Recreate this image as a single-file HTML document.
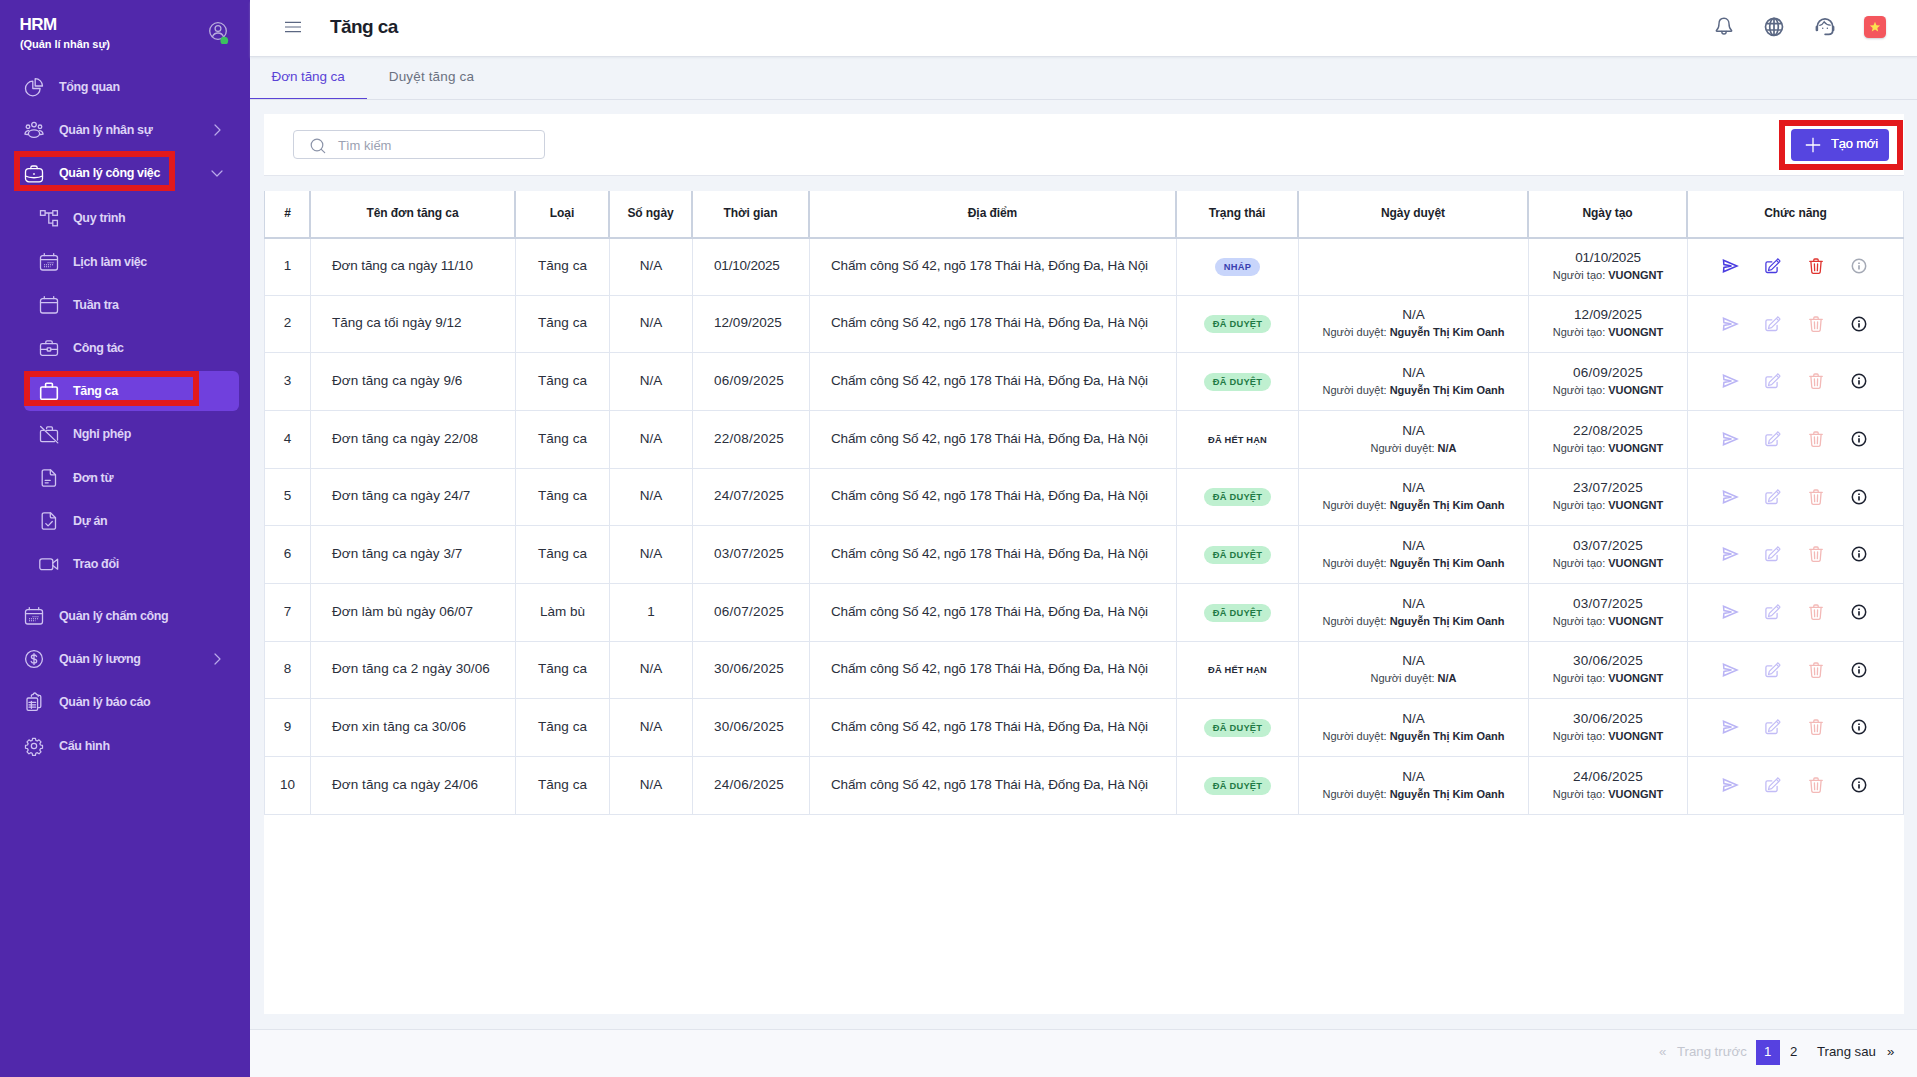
<!DOCTYPE html>
<html lang="vi">
<head>
<meta charset="utf-8">
<title>Tăng ca</title>
<style>
*{box-sizing:border-box;margin:0;padding:0}
html,body{width:1917px;height:1077px;overflow:hidden}
body{font-family:"Liberation Sans",sans-serif;background:#f1f4f9;color:#252a37;position:relative;font-size:13px}
.abs{position:absolute}
/* ---------- sidebar ---------- */
#side{position:absolute;left:0;top:0;width:250px;height:1077px;background:#5128ab;color:#fff}
#side .brand{position:absolute;left:19.500px;top:15px;font-weight:700;font-size:17px;line-height:20px;letter-spacing:-.55px}
#side .brand2{position:absolute;left:20px;top:37px;font-weight:700;font-size:11px;line-height:14px;letter-spacing:-.07px}
.mi{position:absolute;left:0;width:250px;height:40px;color:#ddd3f6;font-weight:700;font-size:12.5px;letter-spacing:-.35px}
.mi svg{position:absolute;top:50%;transform:translateY(-50%);fill:none;stroke:#cfc2f2;stroke-width:1.3;stroke-linecap:round;stroke-linejoin:round}
.mi span{position:absolute;top:50%;transform:translateY(-50%);white-space:nowrap;line-height:16px}
.mi.top svg.ic{left:24px;width:20px;height:20px}
.mi.top span{left:59px}
.mi.sub svg.ic{left:39px;width:20px;height:20px}
.mi.sub span{left:73px}
.mi svg.chev{left:210px;width:14px;height:14px;stroke:#b9a9ea;stroke-width:1.2}
.mi.on{color:#fff}
.mi.on svg.ic{stroke:#fff}
#activebg{position:absolute;left:24px;top:371px;width:215px;height:40px;border-radius:6px;background:#7040dd}
.red{position:absolute;border:6px solid #e3191c;pointer-events:none}
/* ---------- header ---------- */
#head{position:absolute;left:250px;top:0;width:1667px;height:56px;background:#fff;box-shadow:0 1px 0 #dde1e9,0 2px 2px rgba(200,206,218,.35);z-index:3}
#head h1{position:absolute;left:80px;top:15px;font-size:19px;line-height:24px;font-weight:700;color:#1c1f2b;letter-spacing:-.6px}
/* ---------- tabs ---------- */
#tabs{position:absolute;left:250px;top:57px;width:1667px;height:43px;border-bottom:1px solid #dde1ea}
#tabs .t{position:absolute;top:11px;font-size:13.5px;line-height:18px;white-space:nowrap;letter-spacing:-.1px}
#tabs .t1{left:21.600px;color:#5a43d6}
#tabs .t2{left:138.800px;color:#6b7180;letter-spacing:.15px}
#tabs .ul{position:absolute;left:0;top:40.800px;width:117px;height:1.500px;background:#5a43d6}
/* ---------- toolbar ---------- */
#tool{position:absolute;left:264px;top:114px;width:1640px;height:62px;background:#fff;border-bottom:1px solid #e3e6ee}
#search{position:absolute;left:29px;top:16px;width:252px;height:29px;border:1px solid #cdd2de;border-radius:4px;background:#fff}
#search span{position:absolute;left:44px;top:6.800px;font-size:13px;line-height:16px;color:#9ba1b2}
#btn{position:absolute;left:1791px;top:129px;width:98px;height:32px;border-radius:4px;background:#5645e0;color:#fff;font-size:13px;font-weight:400}
#btn span{position:absolute;left:40px;top:7px;line-height:16px;letter-spacing:-.2px;white-space:nowrap;text-shadow:0 0 .4px #fff}
/* ---------- table ---------- */
#card{position:absolute;left:264px;top:191px;width:1640px;height:823px;background:#fff}
.th{position:absolute;top:0;height:48px;border-left:2px solid #cad2e0;font-weight:700;font-size:12px;color:#1c1f2b;text-align:center;line-height:45.500px;letter-spacing:-.07px;white-space:nowrap;margin-left:-1px;z-index:2}
.th:first-child{border-left:1px solid #ced6e3;margin-left:0}
.thr{position:absolute;left:0;top:46px;width:1640px;height:2px;background:#cad2e0;z-index:2}
.rb{position:absolute;left:1639px;top:0;width:1px;height:623px;background:#dfe4ee;z-index:1}
.row{position:absolute;left:0;width:1640px;height:57.600px;border-bottom:1px solid #e1e6f0}
.c{position:absolute;top:0;height:100%;border-left:1px solid #e1e6f0;text-align:center;font-size:13.500px;color:#2a2f3c;white-space:nowrap;display:flex;flex-direction:column;justify-content:center;align-items:center;line-height:17px;padding-bottom:2.400px}
.c:first-child{margin-left:0}
.c.l{align-items:flex-start;padding-left:21px}
.nm{letter-spacing:-.1px}
.loc{letter-spacing:-.16px}
.c.two{padding-bottom:2px}
.c.two>span{margin-bottom:1px}
.c small{font-size:11px;line-height:16px;color:#3a3f4c;letter-spacing:0}
.c small b{color:#252a37}
.badge{display:inline-block;font-style:normal;font-size:9.300px;font-weight:700;letter-spacing:.250px;line-height:18.500px;height:18px;padding:0 8.500px;border-radius:9px;position:relative;top:1.500px}
.b-draft{background:#c8d5fb;color:#3a3fb0}
.b-ok{background:#bff0d0;color:#1f7a45}
.b-exp{color:#252a37;padding:0;letter-spacing:.150px}
.act svg{position:absolute;top:27.800px;transform:translateY(-50%);width:18px;height:18px;fill:none;stroke-linecap:round;stroke-linejoin:round}
.i1,.i2{stroke:#4a3ce0}.i3{stroke:#df342f}.i4{stroke:#a4a9b5}
.dis .i1{stroke:#bab4f5}.dis .i2{stroke:#c2bcf6}.dis .i3{stroke:#f3b9b7}.dis .i4{stroke:#1c2130}
/* ---------- footer ---------- */
#foot{position:absolute;left:250px;top:1029px;width:1667px;height:48px;background:#f8f9fc;border-top:1px solid #e0e4ec}
#foot span{position:absolute;top:13px;font-size:13.2px;line-height:18px;white-space:nowrap}
</style>
</head>
<body>
<div id="side">
<div class="brand">HRM</div>
<div class="brand2">(Quản lí nhân sự)</div>
<svg class="abs" style="left:206.700px;top:19.700px" width="24" height="24" viewBox="0 0 24 24" fill="none" stroke="#b9aedd" stroke-width="1.3"><circle cx="11" cy="11" r="8.300"/><circle cx="11" cy="8.600" r="2.900"/><path d="M5.400 17c1-2.900 3.100-4 5.600-4s4.600 1.100 5.600 4"/><circle cx="17.300" cy="20.700" r="3.900" fill="#3cc25f" stroke="none"/></svg>
<div id="activebg"></div>

<div class="mi top" style="top:67px"><svg class="ic" viewBox="0 0 20 20"><path d="M8.800 4.200A7.300 7.300 0 1 0 16.100 11.500H8.800Z"/><path d="M11.200 1.700a7.300 7.300 0 0 1 7.300 7.300h-7.300Z"/></svg><span>Tổng quan</span></div>

<div class="mi top" style="top:109.5px"><svg class="ic" viewBox="0 0 20 20"><circle cx="10" cy="4.600" r="2.300"/><circle cx="4" cy="6.800" r="1.800"/><circle cx="16" cy="6.800" r="1.800"/><ellipse cx="10" cy="13.600" rx="5.600" ry="3.800"/><path d="M4.800 10.700C2.600 10.700 1.300 12 .9 14.200c1.200.3 2.300.4 3.500.2M15.200 10.700c2.200 0 3.500 1.300 3.900 3.500-1.200.3-2.300.4-3.500.2"/></svg><span>Quản lý nhân sự</span><svg class="chev" viewBox="0 0 14 14"><path d="M5 2l5 5-5 5"/></svg></div>

<div class="mi top on" style="top:152.5px"><svg class="ic" viewBox="0 0 20 20"><rect x="1.500" y="5.600" width="17" height="13.200" rx="3.400"/><path d="M6.800 5.600V4.800a1.800 1.800 0 0 1 1.800-1.800h2.800a1.800 1.800 0 0 1 1.800 1.800v.8"/><path d="M1.500 13c4 2.300 13 2.300 17 0"/><path d="M9.700 11h.6" stroke-width="1.600"/></svg><span>Quản lý công việc</span><svg class="chev" viewBox="0 0 14 14"><path d="M2 5l5 5 5-5"/></svg></div>

<div class="mi sub" style="top:198px"><svg class="ic" viewBox="0 0 20 20" style="stroke-linejoin:miter;stroke-linecap:butt"><rect x="1.500" y="2.700" width="4.600" height="4.600"/><rect x="13.800" y="2.700" width="4.600" height="4.600"/><rect x="13.800" y="12.400" width="4.600" height="5.400"/><path d="M6.100 5h7.700M9.800 5v10.200h4"/></svg><span>Quy trình</span></div>

<div class="mi sub" style="top:242px"><svg class="ic" viewBox="0 0 20 20"><rect x="1.500" y="3.600" width="17" height="14.400" rx="2.200"/><path d="M1.500 7.600h17M5.300 1.600v2M14.700 1.600v2"/><path d="M8.500 10.800h6.500M5 12.800h10M5 14.800h6.500" stroke-dasharray="1.100 .9" stroke-linecap="butt" stroke-width="1.100"/></svg><span>Lịch làm việc</span></div>

<div class="mi sub" style="top:285px"><svg class="ic" viewBox="0 0 20 20"><rect x="1.500" y="3.600" width="17" height="14.400" rx="2.200"/><path d="M1.500 7.600h17M5.300 1.600v2M14.700 1.600v2"/></svg><span>Tuần tra</span></div>

<div class="mi sub" style="top:328px"><svg class="ic" viewBox="0 0 20 20"><rect x="1.500" y="5.600" width="17" height="11.800" rx="1.800"/><path d="M6.800 5.600V4.100a1.300 1.300 0 0 1 1.300-1.300h3.800a1.300 1.300 0 0 1 1.300 1.300v1.500"/><path d="M1.500 11.400h6.700M11.800 11.400h6.700"/><rect x="8.200" y="9.800" width="3.600" height="3.200" rx=".5"/></svg><span>Công tác</span></div>

<div class="mi sub on" style="top:371px"><svg class="ic" viewBox="0 0 20 20" style="stroke-width:1.600"><rect x="1.700" y="6" width="16.600" height="12.400" rx="1.300"/><path d="M6.600 6V3.300a1 1 0 0 1 1-1h4.800a1 1 0 0 1 1 1V6"/></svg><span>Tăng ca</span></div>

<div class="mi sub" style="top:414px"><svg class="ic" viewBox="0 0 20 20"><path d="M4.600 6.400H2.900a1.400 1.400 0 0 0-1.400 1.400v8.400a1.400 1.400 0 0 0 1.400 1.400h12.600"/><path d="M7.300 6.400h9.800a1.400 1.400 0 0 1 1.400 1.400v8.200"/><path d="M7.600 4.600V3.900a1 1 0 0 1 1-1h3.800a1 1 0 0 1 1 1v2.500"/><path d="M1.600 2.500l17.200 16.400"/></svg><span>Nghỉ phép</span></div>

<div class="mi sub" style="top:458px"><svg class="ic" viewBox="0 0 20 20"><path d="M5 1.800h6.500l5 5v9.600a1.800 1.800 0 0 1-1.800 1.800H5a1.800 1.800 0 0 1-1.800-1.800V3.600A1.800 1.800 0 0 1 5 1.800Z"/><path d="M11.300 1.900v3.700a1.200 1.200 0 0 0 1.200 1.200h3.800"/><path d="M6.200 12.400h5M6.200 14.800h3"/></svg><span>Đơn từ</span></div>

<div class="mi sub" style="top:501px"><svg class="ic" viewBox="0 0 20 20"><path d="M5 1.800h6.500l5 5v9.600a1.800 1.800 0 0 1-1.800 1.800H5a1.800 1.800 0 0 1-1.800-1.800V3.600A1.800 1.800 0 0 1 5 1.800Z"/><path d="M11.300 1.900v3.700a1.200 1.200 0 0 0 1.200 1.200h3.800"/><path d="M6.800 12.600l2.300 2.300 4.200-4.400"/></svg><span>Dự án</span></div>

<div class="mi sub" style="top:544px"><svg class="ic" viewBox="0 0 20 20"><rect x=".8" y="4.800" width="13" height="10.800" rx="2.200"/><path d="M13.800 9l4.800-3.800v10l-4.800-3.800"/></svg><span>Trao đổi</span></div>

<div class="mi top" style="top:595.5px"><svg class="ic" viewBox="0 0 20 20"><rect x="1.500" y="3.600" width="17" height="14.400" rx="2.200"/><path d="M1.500 7.600h17M5.300 1.600v2M14.700 1.600v2"/><path d="M8.500 10.800h6.500M5 12.800h10M5 14.800h6.500" stroke-dasharray="1.100 .9" stroke-linecap="butt" stroke-width="1.100"/></svg><span>Quản lý chấm công</span></div>

<div class="mi top" style="top:638.5px"><svg class="ic" viewBox="0 0 20 20"><circle cx="10" cy="10" r="8.400"/><path d="M12.600 7.600c-.3-1-1.300-1.600-2.600-1.600-1.500 0-2.600.8-2.600 2s1 1.700 2.600 2 2.700.8 2.700 2.100-1.200 2-2.700 2c-1.400 0-2.500-.7-2.800-1.800M10 4.600v10.800"/></svg><span>Quản lý lương</span><svg class="chev" viewBox="0 0 14 14"><path d="M5 2l5 5-5 5"/></svg></div>

<div class="mi top" style="top:681.5px"><svg class="ic" viewBox="0 0 20 20"><path d="M7.400 4.300V3.600a1 1 0 0 1 1-1h.8a1.600 1.600 0 0 1 3.200 0h.8a1 1 0 0 1 1 1v.7"/><path d="M14.200 3.400h1.200a1.400 1.400 0 0 1 1.400 1.400v9.400a1.400 1.400 0 0 1-1.400 1.400h-1.800"/><rect x="3" y="6" width="10.600" height="12.400" rx="1.300"/><path d="M5 10.400h6.600M5 12.800h6.600M5 15.200h6.600M7.400 9.300v7"/></svg><span>Quản lý báo cáo</span></div>

<div class="mi top" style="top:725.5px"><svg class="ic" viewBox="0 0 24 24" style="stroke-width:1.500"><circle cx="12" cy="12" r="3.200"/><path d="M10.300 2.800h3.400l.5 2.500 1.700.7 2.100-1.400 2.400 2.400-1.400 2.100.7 1.700 2.500.5v3.400l-2.500.5-.7 1.700 1.400 2.100-2.400 2.400-2.100-1.400-1.700.7-.5 2.500h-3.400l-.5-2.500-1.700-.7-2.100 1.400-2.400-2.400 1.400-2.100-.7-1.700-2.500-.5v-3.400l2.500-.5.7-1.700-1.400-2.100 2.400-2.400 2.100 1.400 1.700-.7Z"/></svg><span>Cấu hình</span></div>

<div class="red" style="left:14px;top:151px;width:161px;height:40px"></div>
<div class="red" style="left:24px;top:371px;width:175px;height:35px"></div>
</div>
<div id="head">
<svg class="abs" style="left:34px;top:20px" width="18" height="14" viewBox="0 0 18 14" fill="none" stroke="#5b6782" stroke-width="1.150"><path d="M1 2.400h16M1 7h16M1 11.600h16"/></svg>
<h1>Tăng ca</h1>
<svg class="abs" style="left:1463px;top:16px" width="22" height="22" viewBox="0 0 22 22" fill="none" stroke="#5b6884" stroke-width="1.400" stroke-linecap="round" stroke-linejoin="round"><path d="M11 2.300c-3.200 0-5 2.400-5 5.400 0 3.600-.9 5.300-2.500 6.600-.4.400-.2.900.4.900h14.200c.6 0 .8-.5.400-.9-1.600-1.300-2.500-3-2.500-6.600 0-3-1.800-5.400-5-5.400Z"/><path d="M8.800 15.400c0 1.500.9 2.600 2.200 2.600s2.200-1.100 2.200-2.600"/></svg>
<svg class="abs" style="left:1513px;top:16px" width="22" height="22" viewBox="0 0 22 22" fill="none" stroke="#5b6884" stroke-width="1.700"><circle cx="11" cy="10.800" r="8.500"/><ellipse cx="11" cy="10.800" rx="4.300" ry="8.500"/><path d="M11 2.300v17M3.300 7.600h15.400M3.300 14h15.400"/></svg>
<svg class="abs" style="left:1564px;top:16px" width="22" height="22" viewBox="0 0 22 22" fill="none" stroke="#5b6884" stroke-width="1.700" stroke-linecap="round"><path d="M3.300 14.200V10.500a7.700 7.700 0 0 1 15.400 0v3.700"/><path d="M2.800 11v3M19.200 11v3" stroke-width="2.400"/><path d="M18.700 14.400c0 2.600-1.600 3.900-4 3.900h-3.600"/><path d="M5.800 9.400c1.600-.4 3.400-1.800 4.400-3.600 1.400 2 3.600 3.200 6 3.400" stroke-width="1.300"/><path d="M8.700 12.200h.1M13.300 12.200h.1" stroke-width="1.400"/></svg>
<div class="abs" style="left:1614px;top:16px;width:22px;height:22px;border-radius:4.500px;background:#f4565d;box-shadow:0 1px 2px rgba(60,70,90,.25)"><svg class="abs" style="left:5px;top:5px" width="12" height="12" viewBox="0 0 12 12"><path fill="#fbe14f" d="M6 .8l1.450 3.450 3.650.3-2.800 2.400.9 3.650L6 8.600l-3.200 2 .9-3.650L.9 4.550l3.650-.3Z"/></svg></div>
</div>
<div id="tabs"><div class="t t1">Đơn tăng ca</div><div class="t t2">Duyệt tăng ca</div><div class="ul"></div></div>
<div id="tool"><div id="search"><svg class="abs" style="left:15px;top:6px" width="18" height="18" viewBox="0 0 18 18" fill="none" stroke="#8b93a8" stroke-width="1.200" stroke-linecap="round"><circle cx="8" cy="8" r="5.800"/><path d="M12.300 12.300l3.400 3.400"/></svg><span>Tìm kiếm</span></div></div>
<div id="btn"><svg class="abs" style="left:13.600px;top:7.700px" width="16" height="16" viewBox="0 0 16 16" fill="none" stroke="#fff" stroke-width="1.300"><path d="M8 .800v14.400M.800 8h14.400"/></svg><span>Tạo mới</span></div>
<div class="red" style="left:1779px;top:120.200px;width:124px;height:50.300px"></div>
<svg width="0" height="0" style="position:absolute"><defs>
<symbol id="i-send" viewBox="0 0 18 18"><path d="M2.500 3.300L16 9 2.500 14.700 2.900 10.500 10.500 9 2.900 7.500Z" stroke-width="1.500" stroke-linejoin="miter"/></symbol>
<symbol id="i-edit" viewBox="0 0 18 18"><path d="M7.800 4.900H3.400a1.500 1.500 0 0 0-1.500 1.500v7.600a1.500 1.500 0 0 0 1.500 1.500h8.200a1.500 1.500 0 0 0 1.500-1.500V10.400" stroke-width="1.300"/><path d="M13.900 1.800l1.800 1.800a.700.700 0 0 1 0 1L7.600 12.700l-3.100.800.800-3.100 8.100-8.100a.700.700 0 0 1 .500-.500ZM12.500 3.400l1.900 1.900" stroke-width="1.200"/></symbol>
<symbol id="i-trash" viewBox="0 0 18 18"><path d="M2.700 4.300h12.600M6.800 4.100V3a1 1 0 0 1 1-1h2.400a1 1 0 0 1 1 1v1.100M3.900 4.600l.9 10.600a1.400 1.400 0 0 0 1.400 1.200h5.600a1.400 1.400 0 0 0 1.400-1.200l.9-10.600M7.400 7l.25 6.700M10.600 7l-.25 6.700" stroke-width="1.300"/></symbol>
<symbol id="i-info" viewBox="0 0 18 18"><circle cx="9" cy="9" r="6.700" stroke-width="1.500"/><path d="M9 8.300v4.300" stroke-width="1.700" stroke-linecap="butt"/><path d="M9 5.400v1.500" stroke-width="1.700" stroke-linecap="butt"/></symbol>
</defs></svg>
<div id="card">
<div class="th" style="left:0px;width:46px">#</div>
<div class="th" style="left:46px;width:205px">Tên đơn tăng ca</div>
<div class="th" style="left:251px;width:94px">Loại</div>
<div class="th" style="left:345px;width:83px">Số ngày</div>
<div class="th" style="left:428px;width:117px">Thời gian</div>
<div class="th" style="left:545px;width:367px">Địa điểm</div>
<div class="th" style="left:912px;width:122px">Trạng thái</div>
<div class="th" style="left:1034px;width:230px">Ngày duyệt</div>
<div class="th" style="left:1264px;width:159px">Ngày tạo</div>
<div class="th" style="left:1423px;width:217px">Chức năng</div>
<div class="thr"></div>
<div class="row" style="top:47px;height:58px">
<div class="c " style="left:0px;width:46px"><span>1</span></div>
<div class="c l" style="left:46px;width:205px"><span class="nm" style="letter-spacing:-0.13px">Đơn tăng ca ngày 11/10</span></div>
<div class="c " style="left:251px;width:94px"><span>Tăng ca</span></div>
<div class="c " style="left:345px;width:83px"><span>N/A</span></div>
<div class="c l" style="left:428px;width:117px"><span class="dt" style="letter-spacing:-0.19px">01/10/2025</span></div>
<div class="c l" style="left:545px;width:367px"><span class="loc">Chấm công Số 42, ngõ 178 Thái Hà, Đống Đa, Hà Nội</span></div>
<div class="c " style="left:912px;width:122px"><i class="badge b-draft">NHÁP</i></div>
<div class="c " style="left:1034px;width:230px"></div>
<div class="c two" style="left:1264px;width:159px"><span class="dt" style="letter-spacing:-0.19px">01/10/2025</span><small>Người tạo: <b>VUONGNT</b></small></div>
<div class="c act" style="left:1423px;width:217px"><svg class="i1" style="left:32.700px"><use href="#i-send"/></svg><svg class="i2" style="left:76.200px"><use href="#i-edit"/></svg><svg class="i3" style="left:119px"><use href="#i-trash"/></svg><svg class="i4" style="left:161.800px"><use href="#i-info"/></svg></div>
</div>
<div class="row dis" style="top:105px;height:57px">
<div class="c " style="left:0px;width:46px"><span>2</span></div>
<div class="c l" style="left:46px;width:205px"><span class="nm" style="letter-spacing:-0.02px">Tăng ca tối ngày 9/12</span></div>
<div class="c " style="left:251px;width:94px"><span>Tăng ca</span></div>
<div class="c " style="left:345px;width:83px"><span>N/A</span></div>
<div class="c l" style="left:428px;width:117px"><span class="dt" style="letter-spacing:0.03px">12/09/2025</span></div>
<div class="c l" style="left:545px;width:367px"><span class="loc">Chấm công Số 42, ngõ 178 Thái Hà, Đống Đa, Hà Nội</span></div>
<div class="c " style="left:912px;width:122px"><i class="badge b-ok">ĐÃ DUYỆT</i></div>
<div class="c two" style="left:1034px;width:230px"><span>N/A</span><small>Người duyệt: <b>Nguyễn Thị Kim Oanh</b></small></div>
<div class="c two" style="left:1264px;width:159px"><span class="dt" style="letter-spacing:0.03px">12/09/2025</span><small>Người tạo: <b>VUONGNT</b></small></div>
<div class="c act" style="left:1423px;width:217px"><svg class="i1" style="left:32.700px"><use href="#i-send"/></svg><svg class="i2" style="left:76.200px"><use href="#i-edit"/></svg><svg class="i3" style="left:119px"><use href="#i-trash"/></svg><svg class="i4" style="left:161.800px"><use href="#i-info"/></svg></div>
</div>
<div class="row dis" style="top:162px;height:58px">
<div class="c " style="left:0px;width:46px"><span>3</span></div>
<div class="c l" style="left:46px;width:205px"><span class="nm" style="letter-spacing:0.03px">Đơn tăng ca ngày 9/6</span></div>
<div class="c " style="left:251px;width:94px"><span>Tăng ca</span></div>
<div class="c " style="left:345px;width:83px"><span>N/A</span></div>
<div class="c l" style="left:428px;width:117px"><span class="dt" style="letter-spacing:0.24px">06/09/2025</span></div>
<div class="c l" style="left:545px;width:367px"><span class="loc">Chấm công Số 42, ngõ 178 Thái Hà, Đống Đa, Hà Nội</span></div>
<div class="c " style="left:912px;width:122px"><i class="badge b-ok">ĐÃ DUYỆT</i></div>
<div class="c two" style="left:1034px;width:230px"><span>N/A</span><small>Người duyệt: <b>Nguyễn Thị Kim Oanh</b></small></div>
<div class="c two" style="left:1264px;width:159px"><span class="dt" style="letter-spacing:0.24px">06/09/2025</span><small>Người tạo: <b>VUONGNT</b></small></div>
<div class="c act" style="left:1423px;width:217px"><svg class="i1" style="left:32.700px"><use href="#i-send"/></svg><svg class="i2" style="left:76.200px"><use href="#i-edit"/></svg><svg class="i3" style="left:119px"><use href="#i-trash"/></svg><svg class="i4" style="left:161.800px"><use href="#i-info"/></svg></div>
</div>
<div class="row dis" style="top:220px;height:58px">
<div class="c " style="left:0px;width:46px"><span>4</span></div>
<div class="c l" style="left:46px;width:205px"><span class="nm" style="letter-spacing:0.06px">Đơn tăng ca ngày 22/08</span></div>
<div class="c " style="left:251px;width:94px"><span>Tăng ca</span></div>
<div class="c " style="left:345px;width:83px"><span>N/A</span></div>
<div class="c l" style="left:428px;width:117px"><span class="dt" style="letter-spacing:0.24px">22/08/2025</span></div>
<div class="c l" style="left:545px;width:367px"><span class="loc">Chấm công Số 42, ngõ 178 Thái Hà, Đống Đa, Hà Nội</span></div>
<div class="c " style="left:912px;width:122px"><i class="badge b-exp">ĐÃ HẾT HẠN</i></div>
<div class="c two" style="left:1034px;width:230px"><span>N/A</span><small>Người duyệt: <b>N/A</b></small></div>
<div class="c two" style="left:1264px;width:159px"><span class="dt" style="letter-spacing:0.24px">22/08/2025</span><small>Người tạo: <b>VUONGNT</b></small></div>
<div class="c act" style="left:1423px;width:217px"><svg class="i1" style="left:32.700px"><use href="#i-send"/></svg><svg class="i2" style="left:76.200px"><use href="#i-edit"/></svg><svg class="i3" style="left:119px"><use href="#i-trash"/></svg><svg class="i4" style="left:161.800px"><use href="#i-info"/></svg></div>
</div>
<div class="row dis" style="top:278px;height:57px">
<div class="c " style="left:0px;width:46px"><span>5</span></div>
<div class="c l" style="left:46px;width:205px"><span class="nm" style="letter-spacing:0.05px">Đơn tăng ca ngày 24/7</span></div>
<div class="c " style="left:251px;width:94px"><span>Tăng ca</span></div>
<div class="c " style="left:345px;width:83px"><span>N/A</span></div>
<div class="c l" style="left:428px;width:117px"><span class="dt" style="letter-spacing:0.24px">24/07/2025</span></div>
<div class="c l" style="left:545px;width:367px"><span class="loc">Chấm công Số 42, ngõ 178 Thái Hà, Đống Đa, Hà Nội</span></div>
<div class="c " style="left:912px;width:122px"><i class="badge b-ok">ĐÃ DUYỆT</i></div>
<div class="c two" style="left:1034px;width:230px"><span>N/A</span><small>Người duyệt: <b>Nguyễn Thị Kim Oanh</b></small></div>
<div class="c two" style="left:1264px;width:159px"><span class="dt" style="letter-spacing:0.24px">23/07/2025</span><small>Người tạo: <b>VUONGNT</b></small></div>
<div class="c act" style="left:1423px;width:217px"><svg class="i1" style="left:32.700px"><use href="#i-send"/></svg><svg class="i2" style="left:76.200px"><use href="#i-edit"/></svg><svg class="i3" style="left:119px"><use href="#i-trash"/></svg><svg class="i4" style="left:161.800px"><use href="#i-info"/></svg></div>
</div>
<div class="row dis" style="top:335px;height:58px">
<div class="c " style="left:0px;width:46px"><span>6</span></div>
<div class="c l" style="left:46px;width:205px"><span class="nm" style="letter-spacing:0.03px">Đơn tăng ca ngày 3/7</span></div>
<div class="c " style="left:251px;width:94px"><span>Tăng ca</span></div>
<div class="c " style="left:345px;width:83px"><span>N/A</span></div>
<div class="c l" style="left:428px;width:117px"><span class="dt" style="letter-spacing:0.24px">03/07/2025</span></div>
<div class="c l" style="left:545px;width:367px"><span class="loc">Chấm công Số 42, ngõ 178 Thái Hà, Đống Đa, Hà Nội</span></div>
<div class="c " style="left:912px;width:122px"><i class="badge b-ok">ĐÃ DUYỆT</i></div>
<div class="c two" style="left:1034px;width:230px"><span>N/A</span><small>Người duyệt: <b>Nguyễn Thị Kim Oanh</b></small></div>
<div class="c two" style="left:1264px;width:159px"><span class="dt" style="letter-spacing:0.24px">03/07/2025</span><small>Người tạo: <b>VUONGNT</b></small></div>
<div class="c act" style="left:1423px;width:217px"><svg class="i1" style="left:32.700px"><use href="#i-send"/></svg><svg class="i2" style="left:76.200px"><use href="#i-edit"/></svg><svg class="i3" style="left:119px"><use href="#i-trash"/></svg><svg class="i4" style="left:161.800px"><use href="#i-info"/></svg></div>
</div>
<div class="row dis" style="top:393px;height:58px">
<div class="c " style="left:0px;width:46px"><span>7</span></div>
<div class="c l" style="left:46px;width:205px"><span class="nm" style="letter-spacing:-0.00px">Đơn làm bù ngày 06/07</span></div>
<div class="c " style="left:251px;width:94px"><span>Làm bù</span></div>
<div class="c " style="left:345px;width:83px"><span>1</span></div>
<div class="c l" style="left:428px;width:117px"><span class="dt" style="letter-spacing:0.24px">06/07/2025</span></div>
<div class="c l" style="left:545px;width:367px"><span class="loc">Chấm công Số 42, ngõ 178 Thái Hà, Đống Đa, Hà Nội</span></div>
<div class="c " style="left:912px;width:122px"><i class="badge b-ok">ĐÃ DUYỆT</i></div>
<div class="c two" style="left:1034px;width:230px"><span>N/A</span><small>Người duyệt: <b>Nguyễn Thị Kim Oanh</b></small></div>
<div class="c two" style="left:1264px;width:159px"><span class="dt" style="letter-spacing:0.24px">03/07/2025</span><small>Người tạo: <b>VUONGNT</b></small></div>
<div class="c act" style="left:1423px;width:217px"><svg class="i1" style="left:32.700px"><use href="#i-send"/></svg><svg class="i2" style="left:76.200px"><use href="#i-edit"/></svg><svg class="i3" style="left:119px"><use href="#i-trash"/></svg><svg class="i4" style="left:161.800px"><use href="#i-info"/></svg></div>
</div>
<div class="row dis" style="top:451px;height:57px">
<div class="c " style="left:0px;width:46px"><span>8</span></div>
<div class="c l" style="left:46px;width:205px"><span class="nm" style="letter-spacing:0.08px">Đơn tăng ca 2 ngày 30/06</span></div>
<div class="c " style="left:251px;width:94px"><span>Tăng ca</span></div>
<div class="c " style="left:345px;width:83px"><span>N/A</span></div>
<div class="c l" style="left:428px;width:117px"><span class="dt" style="letter-spacing:0.24px">30/06/2025</span></div>
<div class="c l" style="left:545px;width:367px"><span class="loc">Chấm công Số 42, ngõ 178 Thái Hà, Đống Đa, Hà Nội</span></div>
<div class="c " style="left:912px;width:122px"><i class="badge b-exp">ĐÃ HẾT HẠN</i></div>
<div class="c two" style="left:1034px;width:230px"><span>N/A</span><small>Người duyệt: <b>N/A</b></small></div>
<div class="c two" style="left:1264px;width:159px"><span class="dt" style="letter-spacing:0.24px">30/06/2025</span><small>Người tạo: <b>VUONGNT</b></small></div>
<div class="c act" style="left:1423px;width:217px"><svg class="i1" style="left:32.700px"><use href="#i-send"/></svg><svg class="i2" style="left:76.200px"><use href="#i-edit"/></svg><svg class="i3" style="left:119px"><use href="#i-trash"/></svg><svg class="i4" style="left:161.800px"><use href="#i-info"/></svg></div>
</div>
<div class="row dis" style="top:508px;height:58px">
<div class="c " style="left:0px;width:46px"><span>9</span></div>
<div class="c l" style="left:46px;width:205px"><span class="nm" style="letter-spacing:0.06px">Đơn xin tăng ca 30/06</span></div>
<div class="c " style="left:251px;width:94px"><span>Tăng ca</span></div>
<div class="c " style="left:345px;width:83px"><span>N/A</span></div>
<div class="c l" style="left:428px;width:117px"><span class="dt" style="letter-spacing:0.24px">30/06/2025</span></div>
<div class="c l" style="left:545px;width:367px"><span class="loc">Chấm công Số 42, ngõ 178 Thái Hà, Đống Đa, Hà Nội</span></div>
<div class="c " style="left:912px;width:122px"><i class="badge b-ok">ĐÃ DUYỆT</i></div>
<div class="c two" style="left:1034px;width:230px"><span>N/A</span><small>Người duyệt: <b>Nguyễn Thị Kim Oanh</b></small></div>
<div class="c two" style="left:1264px;width:159px"><span class="dt" style="letter-spacing:0.24px">30/06/2025</span><small>Người tạo: <b>VUONGNT</b></small></div>
<div class="c act" style="left:1423px;width:217px"><svg class="i1" style="left:32.700px"><use href="#i-send"/></svg><svg class="i2" style="left:76.200px"><use href="#i-edit"/></svg><svg class="i3" style="left:119px"><use href="#i-trash"/></svg><svg class="i4" style="left:161.800px"><use href="#i-info"/></svg></div>
</div>
<div class="row dis" style="top:566px;height:58px">
<div class="c " style="left:0px;width:46px"><span>10</span></div>
<div class="c l" style="left:46px;width:205px"><span class="nm" style="letter-spacing:0.06px">Đơn tăng ca ngày 24/06</span></div>
<div class="c " style="left:251px;width:94px"><span>Tăng ca</span></div>
<div class="c " style="left:345px;width:83px"><span>N/A</span></div>
<div class="c l" style="left:428px;width:117px"><span class="dt" style="letter-spacing:0.24px">24/06/2025</span></div>
<div class="c l" style="left:545px;width:367px"><span class="loc">Chấm công Số 42, ngõ 178 Thái Hà, Đống Đa, Hà Nội</span></div>
<div class="c " style="left:912px;width:122px"><i class="badge b-ok">ĐÃ DUYỆT</i></div>
<div class="c two" style="left:1034px;width:230px"><span>N/A</span><small>Người duyệt: <b>Nguyễn Thị Kim Oanh</b></small></div>
<div class="c two" style="left:1264px;width:159px"><span class="dt" style="letter-spacing:0.24px">24/06/2025</span><small>Người tạo: <b>VUONGNT</b></small></div>
<div class="c act" style="left:1423px;width:217px"><svg class="i1" style="left:32.700px"><use href="#i-send"/></svg><svg class="i2" style="left:76.200px"><use href="#i-edit"/></svg><svg class="i3" style="left:119px"><use href="#i-trash"/></svg><svg class="i4" style="left:161.800px"><use href="#i-info"/></svg></div>
</div>
<div class="rb"></div>
</div>
<div id="foot">
<span style="left:1409px;color:#c3c6cf">«</span><span style="left:1427px;color:#c3c6cf">Trang trước</span>
<div class="abs" style="left:1506px;top:10px;width:24px;height:25px;background:#5641e0"></div>
<span style="left:1514px;color:#fff">1</span><span style="left:1540px;color:#1c1f2b">2</span>
<span style="left:1567px;color:#1c1f2b">Trang sau</span><span style="left:1637px;color:#1c1f2b">»</span>
</div>
</body>
</html>
